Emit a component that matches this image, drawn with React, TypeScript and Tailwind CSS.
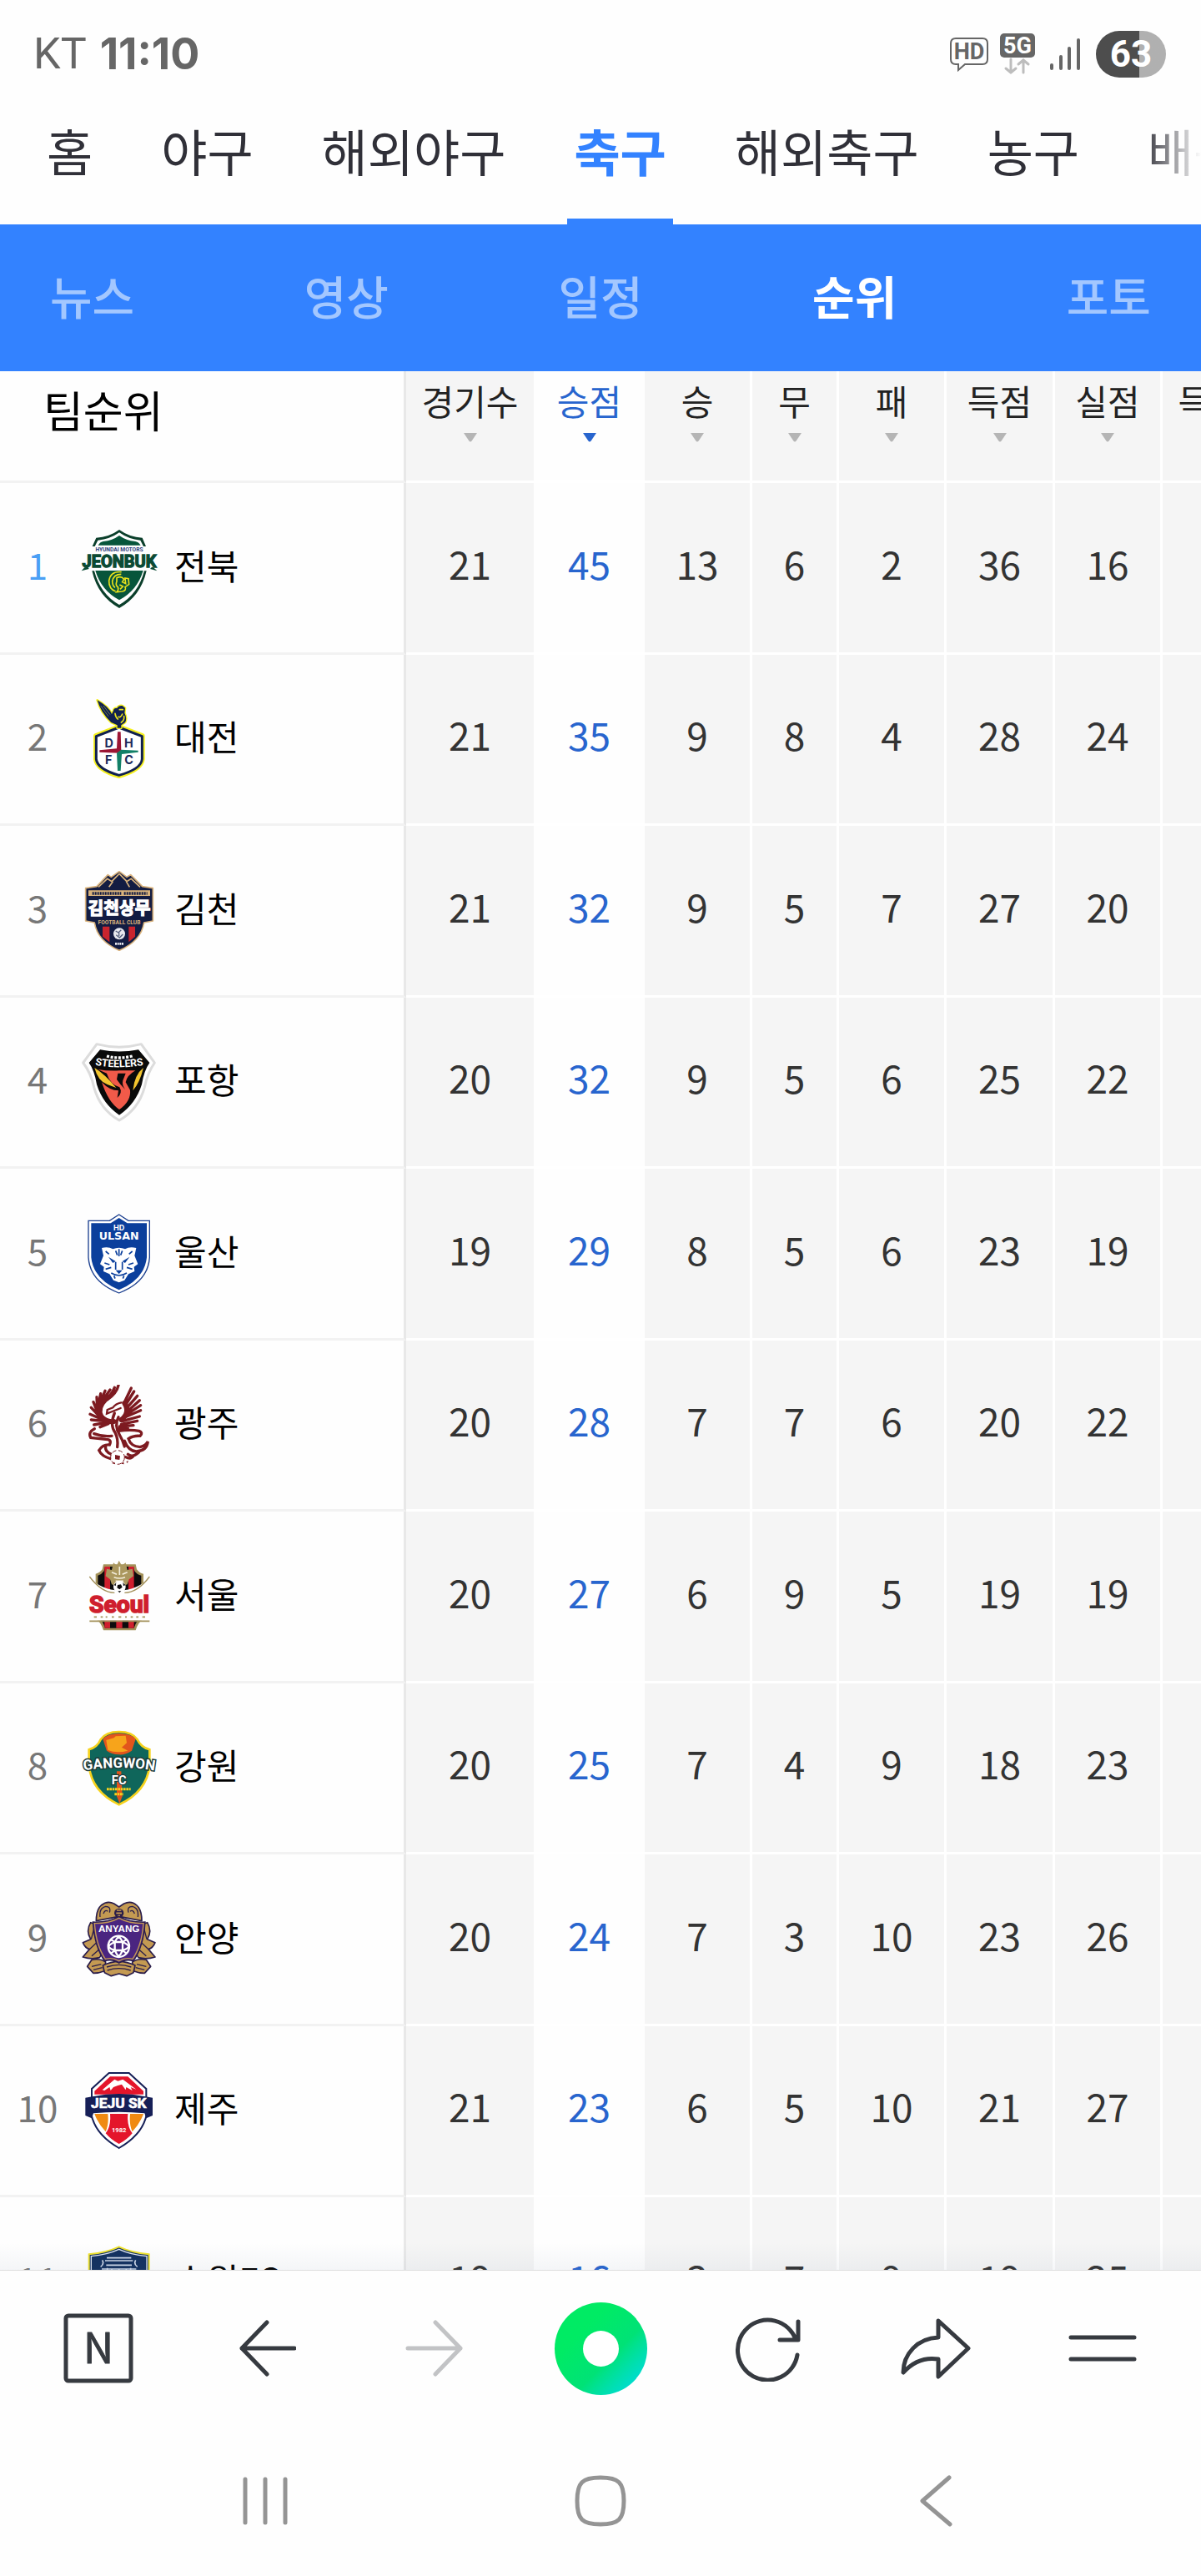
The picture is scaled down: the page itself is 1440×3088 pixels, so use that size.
import React, { useState } from "react";

interface Team {
  rank: number;
  name: string;
  logo: React.ReactNode;
  stats: (number | string)[];
}

const logoText = "font-['Roboto',sans-serif] font-bold";

const JeonbukLogo = () => (
  <svg viewBox="285 96 288 288" className="h-24 w-24" aria-hidden="true">
    <path d="M332 162 L346 131 Q392 129 429 102 Q466 129 512 131 L525 162 L516 162 L505 140 Q462 136 429 112 Q396 136 352 140 L341 162Z" fill="#0b3f2b" />
    <path d="M353 158 Q361 145 372 144 Q404 141 429 123 Q454 141 486 144 Q497 145 506 158Z" fill="#07553b" />
    <text x="429" y="181" textAnchor="middle" fontSize="20" fill="#31437f" className={logoText}>HYUNDAI MOTORS</text>
    <path d="M331 250 Q352 342 429 384 Q506 342 527 250 L519 250 Q497 334 429 372 Q361 334 339 250Z" fill="#0b3f2b" />
    <path d="M343 249 H515 Q494 320 429 355 Q364 320 343 249Z" fill="#07553b" />
    <text x="429" y="238" textAnchor="middle" fontSize="60" fill="#0b4a34" stroke="#0b4a34" strokeWidth="4" className={logoText}>JEONBUK</text>
    <path d="M293 250 L320 243 L316 236 L304 238Z M565 250 L540 243 L546 236 L552 238Z" fill="#0b4a34" />
    <path d="M437 254 Q398 250 392 285 Q391 315 416 324 M436 262 Q408 262 404 288 Q405 304 414 310 M420 275 Q436 267 446 280 L440 290 L452 296 L450 276 L462 278 L464 298 L450 308 Q456 320 440 324 L420 326 Q428 318 424 308 Q414 302 420 288Z M430 300 L442 306 L432 316" fill="none" stroke="#e8e11c" strokeWidth="5" />
  </svg>
);

const DaejeonLogo = () => (
  <svg viewBox="285 714 288 288" className="h-24 w-24" aria-hidden="true">
    <path d="M428 814 L345 846 V930 Q350 968 428 990 Q508 968 512 930 V846Z" fill="#fff" stroke="#f5f01e" strokeWidth="18" strokeLinejoin="round" />
    <path d="M428 816 L346 848 V930 Q350 966 428 988 Q508 966 511 930 V848Z" fill="#fff" stroke="#10204f" strokeWidth="9" strokeLinejoin="round" />
    <g fill="#10204f" stroke="#f5f01e" strokeWidth="8" strokeLinejoin="round" paintOrder="stroke">
      <path d="M350 718 Q392 742 402 768 L408 756 Q408 746 422 746 Q426 736 440 738 L450 746 L448 764 Q458 784 450 798 L436 808 L436 818 H422 V808 L400 798 Q362 762 350 718Z" />
    </g>
    <path d="M414 766 Q416 780 424 786 M430 752 L442 752 M440 768 Q434 782 426 778 M446 776 Q448 790 436 798" fill="none" stroke="#e8e11c" strokeWidth="5" strokeLinecap="round" />
    <path d="M362 738 L390 776 M372 738 L396 770" fill="none" stroke="#6f7a4a" strokeWidth="3" />
    <path d="M423 832 H434 L436 900 L428 908 L358 905 V898 L420 892Z" fill="#9c1534" />
    <path d="M420 908 L436 896 L497 899 V905 L438 912 L434 972 H423Z" fill="#128067" />
    <g fontSize="43" fill="#1a2a5c" textAnchor="middle" className="font-['Inter',sans-serif] font-bold">
      <text x="392" y="887">D</text>
      <text x="463" y="887">H</text>
      <text x="391" y="948">F</text>
      <text x="464" y="948">C</text>
    </g>
  </svg>
);

const GimcheonLogo = () => (
  <svg viewBox="105 70 288 288" className="h-24 w-24" aria-hidden="true">
    <path d="M128 132 L168 126 L208 84 L220 92 L249 72 L276 92 L290 84 L332 126 L370 132 V250 L338 256 Q328 322 249 356 Q170 322 160 256 L128 250Z" fill="#131c42" stroke="#d8b27c" strokeWidth="5" strokeLinejoin="round" />
    <path d="M174 128 L206 98 L222 108 L249 80 L276 108 L292 98 L324 128 M212 128 L226 108 M286 128 L274 108" fill="none" stroke="#d8b27c" strokeWidth="5" />
    <path d="M138 140 H360 V160 H138Z" fill="#d8b27c" />
    <path d="M152 151 H256 M266 151 H350" stroke="#131c42" strokeWidth="10" strokeDasharray="6 3" />
    <text x="249" y="227" textAnchor="middle" fontSize="61" fill="#fff" stroke="#fff" strokeWidth="4" className="font-['Noto_Sans_CJK_SC',sans-serif] font-bold">김천상무</text>
    <text x="249" y="262" textAnchor="middle" fontSize="20" fill="#d8b27c" className={logoText}>FOOTBALL CLUB</text>
    <path d="M189 270 H214 V326 L189 306Z M283 270 H306 V306 L283 326Z" fill="#c9242e" />
    <circle cx="249" cy="296" r="21" fill="#e8e9ee" />
    <path d="M236 286 L246 292 L256 282 M238 300 L250 310 L262 298 M248 292 V304" fill="none" stroke="#55607f" strokeWidth="4" />
    <path d="M234 332 H264" stroke="#e8e9ee" strokeWidth="8" strokeDasharray="6 2" />
  </svg>
);

const PohangLogo = () => (
  <svg viewBox="105 687 288 288" className="h-24 w-24" aria-hidden="true">
    <path d="M168 695 Q249 716 328 695 L376 762 Q350 800 340 850 Q318 930 249 969 Q180 930 158 850 Q148 800 119 762Z" fill="#fff" stroke="#dcdcdc" strokeWidth="9" strokeLinejoin="round" />
    <path d="M180 715 Q249 728 318 715 L358 762 Q338 790 330 840 Q308 910 249 950 Q190 910 168 840 Q160 790 140 762Z" fill="#0a0a0a" />
    <path d="M172 786 Q210 792 249 790 H307 Q276 808 272 832 L288 860 Q292 900 249 930 Q210 905 186 832 Q214 862 246 862 L242 888 Q262 870 250 850 Q216 840 204 800Z" fill="#f15a49" />
    <path d="M244 800 H272 L262 826 Q258 842 270 858 Q252 840 240 822Z" fill="#0a0a0a" />
    <path d="M160 780 Q172 828 206 840 L238 852 Q196 802 160 780Z M336 780 Q304 804 298 862 Q322 836 336 780Z" fill="#f3c62f" />
    <path d="M204 738 Q249 750 296 738" fill="none" stroke="#fff" strokeWidth="10" strokeDasharray="9 5" />
    <path id="steelersArc" d="M150 768 Q249 788 348 768" fill="none" />
    <text fontSize="37" fill="#fff" textAnchor="middle" className={logoText}>
      <textPath href="#steelersArc" startOffset="50%">STEELERS</textPath>
    </text>
  </svg>
);

const UlsanLogo = () => (
  <svg viewBox="105 73 288 288" className="h-24 w-24" aria-hidden="true">
    <path d="M138 98 H214 L248 76 L282 98 H358 V230 Q352 318 248 358 Q144 318 138 230Z" fill="#fff" stroke="#1b3f8f" strokeWidth="4" />
    <path d="M148 107 H218 L248 88 L278 107 H348 V230 Q340 308 248 347 Q156 308 148 230Z" fill="#0b3f9c" />
    <text x="248" y="134" textAnchor="middle" fontSize="27" fill="#fff" className="font-['Inter',sans-serif] font-bold">HD</text>
    <text x="248" y="167" textAnchor="middle" fontSize="38" fill="#fff" className="font-['DejaVu_Sans',sans-serif] font-bold">ULSAN</text>
    <path d="M186 196 Q210 190 226 200 Q248 190 270 200 Q286 190 310 196 L304 224 L316 254 L302 264 L304 280 L282 290 L268 312 L248 320 L228 312 L214 290 L192 280 L194 264 L180 254 L192 224Z" fill="#fff" />
    <path d="M210 228 L236 244 L226 250Z M286 228 L260 244 L270 250Z M236 276 H260 L248 290Z" fill="#0b3f9c" />
    <path d="M200 208 L212 218 M296 208 L284 218 M248 200 V226 M236 206 L242 222 M260 206 L254 222 M236 246 V274 M260 246 V274 M196 250 L214 256 M300 250 L282 256 M200 272 L220 266 M296 272 L276 266 M220 286 Q248 304 276 286 M230 296 L234 306 M266 296 L262 306" fill="none" stroke="#0b3f9c" strokeWidth="5" />
  </svg>
);

const GwangjuLogo = () => (
  <svg viewBox="105 690 288 288" className="h-24 w-24" aria-hidden="true">
    <g fill="none" stroke="#7d1a20" strokeLinecap="round">
      <path d="M246 692 Q240 720 206 744 M232 700 Q222 728 190 750 M216 708 L188 748 M198 712 L180 754 M182 722 L174 762 M168 734 L170 776 M156 752 L170 788 M148 772 L174 800 M144 796 L182 812 M148 816 L190 820 M158 834 L200 826 M180 842 L210 830" strokeWidth="10" />
      <path d="M292 702 L270 748 M302 714 L272 762 M314 730 L274 776 M322 746 L278 786 M326 764 L276 796 M326 782 L270 806 M322 804 L262 820 M314 820 L256 832 M300 836 L250 840 M280 846 L248 848" strokeWidth="10" />
      <path d="M200 742 Q168 774 184 804 Q202 826 230 822 M268 756 Q290 790 256 816" strokeWidth="18" />
      <path d="M256 754 Q236 758 226 772 L206 780 L204 794 L224 786 Q240 780 254 774" strokeWidth="7" />
      <path d="M232 792 Q214 834 234 862 Q246 886 242 914 M246 806 Q230 836 250 870 Q262 890 268 912" strokeWidth="10" />
      <path d="M246 856 Q290 850 320 856 Q336 862 324 874 Q300 872 282 884 Q290 912 324 914 Q346 908 352 894 Q348 928 310 930 Q282 928 268 892" strokeWidth="10" />
      <path d="M160 848 Q136 860 146 880 L200 886 Q224 886 214 906 Q190 904 176 926 Q186 948 218 956 M158 866 Q190 878 222 874 M200 910 Q196 930 220 940" strokeWidth="10" />
      <path d="M280 940 Q296 954 320 932 M272 950 Q290 960 300 946" strokeWidth="10" />
    </g>
    <circle cx="243" cy="951" r="25" fill="#fff" stroke="#7d1a20" strokeWidth="3" strokeDasharray="16 8" />
    <path d="M234 942 L252 946 L250 960 L234 958Z M222 972 L232 968 L234 976Z M256 974 L264 966 L266 976Z M274 966 L282 964 L278 972Z" fill="#7d1a20" />
  </svg>
);

const SeoulLogo = () => (
  <svg viewBox="105 76 288 288" className="h-24 w-24" aria-hidden="true">
    <path d="M192 104 H308 L312 122 Q322 136 336 138 V300 Q316 312 308 341 H192 Q184 312 164 300 V138 Q180 134 188 122Z" fill="#a3915a" />
    <path d="M198 112 H300 L304 128 Q314 142 328 144 V296 Q310 306 302 333 H198 Q190 306 172 296 V144 Q186 140 194 128Z" fill="#0d0b0c" />
    <path d="M196 112 H216 V333 H196Z M238 112 H260 V333 H238Z M282 112 H302 V333 H282Z" fill="#cf1f2e" />
    <path d="M204 120 L222 124 L228 98 L240 108 L248 90 L258 108 L272 98 L278 124 L296 120 L300 146 L284 158 L278 176 L250 184 L222 176 L216 158 L200 146Z" fill="#ab985f" />
    <path d="M222 132 L240 140 M278 132 L260 140 M230 150 Q250 158 270 150 M236 164 H264 M250 112 V142" stroke="#f4eedc" strokeWidth="5" fill="none" />
    <path d="M140 150 Q186 196 250 198 Q314 196 360 150 L358 206 V306 H144 V206Z" fill="#fff" />
    <path d="M142 148 Q186 206 232 206 M358 148 Q314 206 268 206" fill="none" stroke="#a3915a" strokeWidth="4" />
    <circle cx="250" cy="185" r="22" fill="#fff" />
    <path d="M243 178 L255 176 L260 186 L250 194 L241 188Z M230 178 L238 170 L236 182Z M262 170 L271 178 L264 182Z M244 200 L256 200 L250 206Z" fill="#0d0b0c" />
    <text x="249" y="278" textAnchor="middle" fontSize="85" fill="#cf1f2e" stroke="#cf1f2e" strokeWidth="5" className={logoText}>Seoul</text>
    <path d="M142 308 H358 M158 293 H168 M182 293 H190 M200 293 H206 M222 293 H230 M246 293 H256 M270 293 H276 M290 293 H298 M310 293 H318 M332 293 H342" stroke="#a3915a" strokeWidth="5" />
  </svg>
);

const GangwonLogo = () => (
  <svg viewBox="105 693 288 288" className="h-24 w-24" aria-hidden="true">
    <path d="M182 736 Q200 708 248 708 Q296 708 314 736 Q328 764 358 772 V830 Q348 924 248 970 Q150 924 140 830 V772 Q170 764 182 736Z" fill="#0f665b" stroke="#f6d21c" strokeWidth="8" />
    <path d="M190 734 Q206 714 248 714 Q292 714 308 734 L294 776 Q270 792 248 790 Q220 788 204 776Z" fill="#e2551c" />
    <path d="M202 738 L230 730 L236 724 L272 722 L276 748 L258 764 L280 776 Q240 786 208 774Z" fill="#f7a41b" />
    <path d="M240 850 H256 L260 940 L250 966 L240 940Z" fill="#e2551c" />
    <path id="gangwonArc" d="M106 850 Q249 824 392 850" fill="none" />
    <text fontSize="51" fill="#fff" stroke="#1d3b3a" strokeWidth="9" textAnchor="middle" paintOrder="stroke" className={logoText}>
      <textPath href="#gangwonArc" startOffset="50%">GANGWON</textPath>
    </text>
    <text x="248" y="896" textAnchor="middle" fontSize="44" fill="#fff" stroke="#1d3b3a" strokeWidth="7" paintOrder="stroke" className={logoText}>FC</text>
    <path d="M204 914 H290 M232 932 H264" stroke="#f6d21c" strokeWidth="9" strokeDasharray="8 2" />
  </svg>
);

const AnyangLogo = () => (
  <svg viewBox="105 109 288 288" className="h-24 w-24" aria-hidden="true">
    <g fill="#c49a52" stroke="#2a1d4a" strokeWidth="5" strokeLinejoin="round">
      <path d="M166 186 Q166 146 184 130 Q206 112 230 124 L248 136 L266 124 Q292 112 312 130 Q330 146 330 186 L248 170Z" />
      <path d="M146 192 Q128 222 146 252 L118 264 Q126 284 142 288 L118 316 Q150 326 178 318 L196 290 L170 200Z" />
      <path d="M350 192 Q368 222 350 252 L378 264 Q370 284 354 288 L378 316 Q346 326 318 318 L300 290 L326 200Z" />
      <path d="M134 350 L150 326 Q180 320 200 334 L196 366 Q176 374 156 374Z M362 350 L346 326 Q316 320 296 334 L300 366 Q320 374 340 374Z" />
      <path d="M190 346 Q248 318 306 346 L300 372 L276 384 L248 376 L220 384 L196 372Z" />
      <path d="M180 172 Q176 140 200 134 Q220 134 214 156 M316 172 Q320 140 296 134 Q276 134 282 156 M192 160 Q198 144 208 152 M304 160 Q298 144 288 152 M204 352 Q248 336 292 352 M206 364 Q248 350 290 364 M150 350 L184 342 M156 362 L188 354 M346 350 L312 342 M340 362 L308 354 M142 288 L176 256 M354 288 L320 256 M150 312 L182 284 M346 312 L314 284 M148 252 L158 214 M348 252 L338 214" fill="none" strokeWidth="4" />
    </g>
    <circle cx="248" cy="158" r="17" fill="#2a1d4a" />
    <path d="M240 148 H256 M238 158 H258 M244 168 H252" stroke="#c49a52" strokeWidth="5" />
    <path d="M154 190 Q210 192 248 170 Q286 192 342 190 Q336 280 300 330 Q270 322 248 338 Q226 322 196 330 Q160 280 154 190Z" fill="#4a2580" stroke="#2a1d4a" strokeWidth="4" />
    <path d="M160 195 Q212 196 248 176 Q284 196 336 195 Q330 276 297 323 Q270 316 248 330 Q226 316 199 323 Q166 276 160 195Z" fill="none" stroke="#c49a52" strokeWidth="4" />
    <text x="248" y="226" textAnchor="middle" fontSize="35" fill="#fff" className="font-['Liberation_Sans',sans-serif] font-bold">ANYANG</text>
    <g fill="none" stroke="#fff" strokeWidth="7">
      <circle cx="247" cy="278" r="38" />
      <path d="M233 262 H261 V292 H233Z M233 262 Q222 254 218 254 M261 262 Q272 254 276 254 M233 292 Q222 302 218 302 M261 292 Q272 302 276 302 M233 262 Q240 248 247 242 Q254 248 261 262 M233 292 Q240 308 247 314 Q254 308 261 292 M233 262 Q214 270 211 278 Q214 286 233 292 M261 262 Q280 270 283 278 Q280 286 261 292" />
    </g>
  </svg>
);

const JejuLogo = () => (
  <svg viewBox="105 726 288 288" className="h-24 w-24" aria-hidden="true">
    <path d="M212 735 H284 L346 792 V890 Q330 958 248 1005 Q166 958 150 890 V792Z" fill="#fff" stroke="#161f57" strokeWidth="6" />
    <path d="M216 748 H280 L336 800 V812 H160 V800Z" fill="#e4152b" />
    <path d="M188 796 L232 758 L244 764 L262 758 L310 794 L290 786 L296 798 L274 786 L272 796 L258 776 L244 780 L228 786 L218 798 L214 786 L196 798Z" fill="#fff" />
    <path d="M160 882 H208 Q212 920 200 946 Q172 916 160 882Z M336 882 H288 Q284 920 296 946 Q324 916 336 882Z" fill="#f08a12" />
    <path d="M216 882 H280 Q276 926 296 952 Q276 976 248 990 Q220 976 200 952 Q220 926 216 882Z" fill="#e4152b" />
    <path d="M127 824 L152 820 Q248 800 344 820 L369 824 V888 L346 898 L340 880 Q248 870 156 880 L150 898 L127 888Z" fill="#161f57" />
    <text x="247" y="862" textAnchor="middle" fontSize="52" fill="#fff" stroke="#fff" strokeWidth="2" className={logoText}>JEJU SK</text>
    <text x="248" y="947" textAnchor="middle" fontSize="23" fill="#fff" className={logoText}>1982</text>
  </svg>
);

const SuwonLogo = () => (
  <svg viewBox="105 1342 288 288" className="h-24 w-24" aria-hidden="true">
    <path d="M140 1385 Q206 1378 248 1358 Q290 1378 356 1385 V1500 Q350 1584 248 1624 Q146 1584 140 1500Z" fill="#12305f" stroke="#efe22c" strokeWidth="6" />
    <path d="M148 1392 Q208 1386 248 1367 Q288 1386 348 1392 V1500 Q340 1576 248 1614 Q156 1576 148 1500Z" fill="none" stroke="#dfe6f2" strokeWidth="4" />
    <path d="M204 1398 H292 M188 1406 Q196 1420 182 1430 M308 1406 Q300 1420 314 1430 M198 1408 H298 M202 1424 H294 M186 1438 H310 M206 1434 V1480 M290 1434 V1480 M222 1438 V1480 M248 1438 V1480 M274 1438 V1480" fill="none" stroke="#cfd9ea" strokeWidth="5" />
  </svg>
);

const teams: Team[] = [
  { rank: 1, name: "전북", logo: <JeonbukLogo />, stats: [21, 45, 13, 6, 2, 36, 16, ""] },
  { rank: 2, name: "대전", logo: <DaejeonLogo />, stats: [21, 35, 9, 8, 4, 28, 24, ""] },
  { rank: 3, name: "김천", logo: <GimcheonLogo />, stats: [21, 32, 9, 5, 7, 27, 20, ""] },
  { rank: 4, name: "포항", logo: <PohangLogo />, stats: [20, 32, 9, 5, 6, 25, 22, ""] },
  { rank: 5, name: "울산", logo: <UlsanLogo />, stats: [19, 29, 8, 5, 6, 23, 19, ""] },
  { rank: 6, name: "광주", logo: <GwangjuLogo />, stats: [20, 28, 7, 7, 6, 20, 22, ""] },
  { rank: 7, name: "서울", logo: <SeoulLogo />, stats: [20, 27, 6, 9, 5, 19, 19, ""] },
  { rank: 8, name: "강원", logo: <GangwonLogo />, stats: [20, 25, 7, 4, 9, 18, 23, ""] },
  { rank: 9, name: "안양", logo: <AnyangLogo />, stats: [20, 24, 7, 3, 10, 23, 26, ""] },
  { rank: 10, name: "제주", logo: <JejuLogo />, stats: [21, 23, 6, 5, 10, 21, 27, ""] },
  { rank: 11, name: "수원FC", logo: <SuwonLogo />, stats: [19, 16, 3, 7, 9, 19, 25, ""] },
];

const columns = ["경기수", "승점", "승", "무", "패", "득점", "실점", "득실차"];
const sports = ["홈", "야구", "해외야구", "축구", "해외축구", "농구", "배구"];
const menus = ["뉴스", "영상", "일정", "순위", "포토"];

const StatusBar = () => (
  <div className="flex h-[130px] shrink-0 items-center justify-between pl-10 pr-[42px] text-[#666]">
    <div className="flex items-center gap-4 text-[52px] leading-none">
      <span className="font-['Roboto',sans-serif]">KT</span>
      <span className="font-['Inter',sans-serif] font-bold">11:10</span>
    </div>
    <div className="flex items-center">
      <svg width="48" height="42" viewBox="0 0 48 42" className="mr-[13px]" aria-label="HD">
        <path d="M8 2 H40 Q46 2 46 8 V27 Q46 33 40 33 H19 L11 40 V33 H8 Q2 33 2 27 V8 Q2 2 8 2Z" fill="none" stroke="#666" strokeWidth="2" />
        <text x="24" y="27" textAnchor="middle" fontSize="27" fill="#666" className={logoText}>HD</text>
      </svg>
      <svg width="42" height="50" viewBox="0 0 42 50" className="mr-[18px]" aria-label="5G">
        <rect x="0" y="0" width="42" height="29" rx="5" fill="#666" />
        <text x="21" y="24" textAnchor="middle" fontSize="27" fill="#fff" className={logoText}>5G</text>
        <path d="M13 31 V47 M7 42 L13 47 L19 42 M28 47 V32 M22 37 L28 32 L34 37" fill="none" stroke="#bdbdbd" strokeWidth="3" strokeLinecap="round" />
      </svg>
      <svg width="36" height="40" viewBox="0 0 36 40" className="mr-[19px]" aria-label="signal">
        <path d="M2 33 V37 M13 23 V37 M23 13 V37 M34 3 V37" stroke="#666" strokeWidth="4" strokeLinecap="round" />
      </svg>
      <div className="flex h-14 w-[84px] items-center justify-center rounded-full bg-linear-to-r from-[#4d4d4d] from-62% to-[#b0b0b0] to-62% font-['Roboto',sans-serif] text-[44px] font-bold leading-none text-white">
        63
      </div>
    </div>
  </div>
);

const SortArrow = ({ active }: { active: boolean }) => (
  <svg width="16" height="11" viewBox="0 0 16 11" className="mt-4" aria-hidden="true">
    <path d="M0 0 H16 L10 9 Q8 12 6 9Z" fill={active ? "#2865ce" : "#b5b5b5"} />
  </svg>
);

const App = () => {
  const [sport, setSport] = useState("축구");
  const [menu, setMenu] = useState("순위");

  return (
    <div className="flex h-screen flex-col overflow-hidden bg-[#fefefe] font-['Noto_Sans_CJK_SC','Noto_Sans_CJK_KR',sans-serif]">
      <StatusBar />

      {/* Sports tabs */}
      <nav className="relative h-[139px] shrink-0 overflow-hidden">
        <div className="flex h-full w-max gap-[66px] pl-12">
          {sports.map((name) => (
            <button
              key={name}
              onClick={() => setSport(name)}
              className={`flex h-full shrink-0 border-b-[7px] px-2 text-[60px] leading-[100px] ${
                sport === name ? "border-[#3382ff] font-bold text-[#3382ff]" : "border-transparent text-[#303038]"
              }`}
            >
              {name}
            </button>
          ))}
        </div>
        <div className="absolute inset-y-0 right-0 w-[70px] bg-linear-to-r from-[#fefefe]/0 to-[#fefefe]" />
      </nav>

      {/* Section menu */}
      <nav className="flex h-44 shrink-0 items-center justify-between bg-[#3382ff] px-[60px] pb-2">
        {menus.map((name) => (
          <button
            key={name}
            onClick={() => setMenu(name)}
            className={`text-[55px] leading-none ${menu === name ? "font-bold text-white" : "font-medium text-[#a3c7ff]"}`}
          >
            {name}
          </button>
        ))}
      </nav>

      {/* Standings */}
      <main className="relative min-h-0 flex-1 overflow-hidden">
        <table className="w-max table-fixed border-separate border-spacing-0">
          <colgroup>
            <col className="w-[487px]" />
            <col className="w-[153px]" />
            <col className="w-[133px]" />
            <col className="w-[129px]" />
            <col className="w-[104px]" />
            <col className="w-[129px]" />
            <col className="w-[130px]" />
            <col className="w-[129px]" />
            <col className="w-[156px]" />
          </colgroup>
          <thead>
            <tr className="h-[134px]">
              <th className="border-b-[3px] border-r-[3px] border-b-[#f2f2f2] border-r-[#e8e8e8] pb-10 pl-[52px] text-left text-[52px] font-normal leading-none text-black">
                팀순위
              </th>
              {columns.map((name) => {
                const active = name === "승점";
                return (
                  <th
                    key={name}
                    className={`border-b-[3px] border-white p-0 align-top font-normal ${
                      active ? "text-[#2865ce]" : "bg-[#f5f5f5] text-[#222]"
                    } ${active || name === "경기수" ? "" : "border-r-[3px]"}`}
                  >
                    <button className="flex w-full flex-col items-center pt-3 text-[42px] leading-[46px]">
                      {name}
                      <SortArrow active={active} />
                    </button>
                  </th>
                );
              })}
            </tr>
          </thead>
          <tbody>
            {teams.map((team) => (
              <tr key={team.rank} className="odd:h-[206px] even:h-[205px]">
                <th className="border-b-[3px] border-r-[3px] border-b-[#f2f2f2] border-r-[#e8e8e8] p-0 font-normal">
                  <div className="flex items-center">
                    <span className={`w-[90px] pb-2.5 text-center text-[44px] leading-none ${team.rank === 1 ? "text-[#4a9ff5]" : "text-[#777]"}`}>
                      {team.rank}
                    </span>
                    <span className="ml-[5px] mr-[18px]">{team.logo}</span>
                    <span className="pb-2 text-[42px] leading-none text-black">{team.name}</span>
                  </div>
                </th>
                {team.stats.map((value, i) => (
                  <td
                    key={columns[i]}
                    className={`border-b-[3px] border-white p-0 pb-3 text-center text-[46px] leading-none ${
                      i === 1 ? "text-[#2865ce]" : "bg-[#f5f5f5] text-[#333]"
                    } ${i > 1 ? "border-r-[3px]" : ""}`}
                  >
                    {value}
                  </td>
                ))}
              </tr>
            ))}
          </tbody>
        </table>
        <div className="absolute inset-x-0 bottom-0 h-8 bg-linear-to-b from-[#5a7090]/0 to-[#5a7090]/6" />
      </main>

      {/* Browser toolbar */}
      <footer className="shrink-0 border-t border-[#dedede] bg-[#fefefe]">
        <div className="flex h-[186px] items-center px-[18px] text-[#363a40] [&>button]:flex [&>button]:flex-1 [&>button]:justify-center">
          <button aria-label="네이버 홈">
            <svg width="84" height="84" viewBox="0 0 84 84" fill="none" stroke="currentColor" strokeWidth="5" strokeLinejoin="round" strokeLinecap="round">
              <rect x="3" y="3" width="78" height="78" rx="3" />
              <text x="42" y="60" textAnchor="middle" fontSize="50" fill="currentColor" strokeWidth="1" className="font-['Noto_Sans_CJK_SC',sans-serif]">N</text>
            </svg>
          </button>
          <button aria-label="뒤로">
            <svg width="72" height="72" viewBox="0 0 72 72" fill="none" stroke="currentColor" strokeWidth="5" strokeLinejoin="round" strokeLinecap="round">
              <path d="M37 5 L7 36 L37 67 M7 36 H70" />
            </svg>
          </button>
          <button aria-label="앞으로" disabled className="text-[#c2c3c5]">
            <svg width="72" height="72" viewBox="0 0 72 72" fill="none" stroke="currentColor" strokeWidth="5" strokeLinejoin="round" strokeLinecap="round">
              <path d="M39 5 L69 36 L39 67 M69 36 H6" />
            </svg>
          </button>
          <button aria-label="그린닷">
            <span className="flex h-[111px] w-[111px] items-center justify-center rounded-full bg-linear-to-br from-[#00eb64] from-30% via-[#00e276] via-60% to-[#00d7f5]">
              <span className="h-[43px] w-[43px] rounded-full bg-white" />
            </span>
          </button>
          <button aria-label="새로고침">
            <svg width="80" height="80" viewBox="0 0 80 80" fill="none" stroke="currentColor" strokeWidth="5" strokeLinejoin="round" strokeLinecap="round">
              <path d="M75 48 A36 36 0 1 1 73 29 M76 8 V30 H54" />
            </svg>
          </button>
          <button aria-label="공유">
            <svg width="86" height="76" viewBox="0 0 86 76" fill="none" stroke="currentColor" strokeWidth="5" strokeLinejoin="round" strokeLinecap="round">
              <path d="M47 5 L83 38 L47 72 V51 C28 48 15 56 5 67 C5 45 22 26 47 25Z" />
            </svg>
          </button>
          <button aria-label="메뉴">
            <svg width="84" height="34" viewBox="0 0 84 34" fill="none" stroke="currentColor" strokeWidth="5" strokeLinecap="round">
              <path d="M4 4 H80 M4 30 H80" />
            </svg>
          </button>
        </div>
        <div className="flex h-[180px] items-center px-[117px] text-[#949494] [&>button]:flex [&>button]:flex-1 [&>button]:justify-center">
          <button aria-label="최근 앱">
            <svg width="54" height="60" viewBox="0 0 54 60" fill="none" stroke="currentColor" strokeWidth="5" strokeLinecap="round">
              <path d="M3 4 V56 M27 4 V56 M51 4 V56" />
            </svg>
          </button>
          <button aria-label="홈 화면">
            <svg width="62" height="62" viewBox="0 0 62 62" fill="none" stroke="currentColor" strokeWidth="5">
              <path d="M31 3 C53 3 59 9 59 31 C59 53 53 59 31 59 C9 59 3 53 3 31 C3 9 9 3 31 3Z" />
            </svg>
          </button>
          <button aria-label="이전">
            <svg width="40" height="62" viewBox="0 0 40 62" fill="none" stroke="currentColor" strokeWidth="5" strokeLinejoin="round" strokeLinecap="round">
              <path d="M36 3 L4 31 L37 59" />
            </svg>
          </button>
        </div>
      </footer>
    </div>
  );
};

export default App;
